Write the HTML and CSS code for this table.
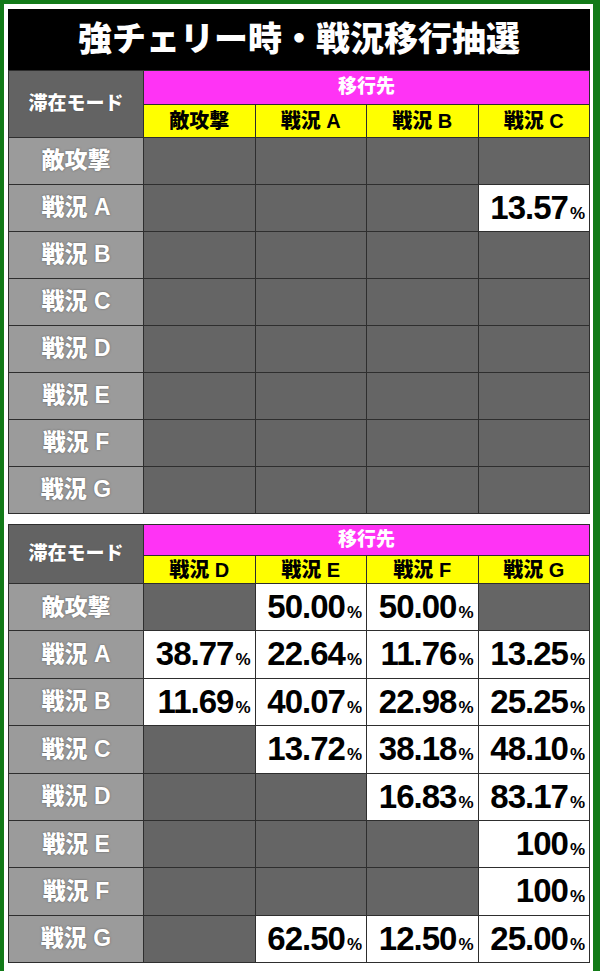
FILE: index.html
```html
<!DOCTYPE html>
<html lang="ja">
<head>
<meta charset="utf-8">
<title>強チェリー時・戦況移行抽選</title>
<link rel="stylesheet" href="styles.css">
</head>
<body>
<div class="frame">
  <h1 class="title">強チェリー時・戦況移行抽選</h1>

  <!-- 上段：敵攻撃～戦況C -->
  <table class="trans first">
    <colgroup>
      <col class="c-mode"><col><col><col><col>
    </colgroup>
    <tr class="h1">
      <th class="mode" rowspan="2">滞在モード</th>
      <th class="dest" colspan="4">移行先</th>
    </tr>
    <tr class="h2">
      <th class="col">敵攻撃</th>
      <th class="col">戦況 A</th>
      <th class="col">戦況 B</th>
      <th class="col">戦況 C</th>
    </tr>
    <tr><th class="rh">敵攻撃</th><td class="e"></td><td class="e"></td><td class="e"></td><td class="e"></td></tr>
    <tr><th class="rh">戦況 A</th><td class="e"></td><td class="e"></td><td class="e"></td><td class="v">13.57<small>%</small></td></tr>
    <tr><th class="rh">戦況 B</th><td class="e"></td><td class="e"></td><td class="e"></td><td class="e"></td></tr>
    <tr><th class="rh">戦況 C</th><td class="e"></td><td class="e"></td><td class="e"></td><td class="e"></td></tr>
    <tr><th class="rh">戦況 D</th><td class="e"></td><td class="e"></td><td class="e"></td><td class="e"></td></tr>
    <tr><th class="rh">戦況 E</th><td class="e"></td><td class="e"></td><td class="e"></td><td class="e"></td></tr>
    <tr><th class="rh">戦況 F</th><td class="e"></td><td class="e"></td><td class="e"></td><td class="e"></td></tr>
    <tr><th class="rh">戦況 G</th><td class="e"></td><td class="e"></td><td class="e"></td><td class="e"></td></tr>
  </table>

  <!-- 下段：戦況D～戦況G -->
  <table class="trans second">
    <colgroup>
      <col class="c-mode"><col><col><col><col>
    </colgroup>
    <tr class="h1">
      <th class="mode" rowspan="2">滞在モード</th>
      <th class="dest" colspan="4">移行先</th>
    </tr>
    <tr class="h2">
      <th class="col">戦況 D</th>
      <th class="col">戦況 E</th>
      <th class="col">戦況 F</th>
      <th class="col">戦況 G</th>
    </tr>
    <tr><th class="rh">敵攻撃</th><td class="e"></td><td class="v">50.00<small>%</small></td><td class="v">50.00<small>%</small></td><td class="e"></td></tr>
    <tr><th class="rh">戦況 A</th><td class="v">38.77<small>%</small></td><td class="v">22.64<small>%</small></td><td class="v">11.76<small>%</small></td><td class="v">13.25<small>%</small></td></tr>
    <tr><th class="rh">戦況 B</th><td class="v">11.69<small>%</small></td><td class="v">40.07<small>%</small></td><td class="v">22.98<small>%</small></td><td class="v">25.25<small>%</small></td></tr>
    <tr><th class="rh">戦況 C</th><td class="e"></td><td class="v">13.72<small>%</small></td><td class="v">38.18<small>%</small></td><td class="v">48.10<small>%</small></td></tr>
    <tr><th class="rh">戦況 D</th><td class="e"></td><td class="e"></td><td class="v">16.83<small>%</small></td><td class="v">83.17<small>%</small></td></tr>
    <tr><th class="rh">戦況 E</th><td class="e"></td><td class="e"></td><td class="e"></td><td class="v">100<small>%</small></td></tr>
    <tr><th class="rh">戦況 F</th><td class="e"></td><td class="e"></td><td class="e"></td><td class="v">100<small>%</small></td></tr>
    <tr><th class="rh">戦況 G</th><td class="e"></td><td class="v">62.50<small>%</small></td><td class="v">12.50<small>%</small></td><td class="v">25.00<small>%</small></td></tr>
  </table>
</div>
</body>
</html>
```

FILE: styles.css
```css
body { margin:0; background:#fff; font-family:"Liberation Sans","Noto Sans CJK JP",sans-serif; }
.frame { width:582px; height:962px; border:4px solid #127a18; border-right-width:7px; border-bottom-width:6px; padding:5px 3px 3px 4px; }
.title { margin:0; height:61px; background:#000; color:#fff; font-size:34px; font-weight:900; line-height:61px; text-align:center; }

.trans { width:582px; table-layout:fixed; border-collapse:collapse; line-height:1.1; }
.trans.second { margin-top:10px; }
.trans col.c-mode { width:135px; }
.trans th, .trans td { border:1px solid #2e2e2e; padding:0; font-weight:900; }

.trans .mode { background:#636363; color:#fff; font-size:19px; text-shadow:0 0 1px #333; }
.trans .dest { background:#ff33f5; color:#fff; font-size:19px; }
.trans .col { background:#ffff00; color:#000; font-size:20px; }
.trans .rh { background:#9b9b9b; color:#fff; font-size:23px; text-shadow:0 0 2px #555; }
.trans .e { background:#656565; }
.trans .v { background:#fff; color:#000; font-size:33px; text-align:right; padding-right:4px; letter-spacing:-1px; }
.trans .v small { font-size:17px; letter-spacing:0; margin-left:2px; }

.first .h1 { height:34px; }
.first .h2 { height:33px; }
.first tr { height:47px; }
.second .h1 { height:31px; }
.second .h2 { height:28px; }
.second tr { height:47.4px; }
```
